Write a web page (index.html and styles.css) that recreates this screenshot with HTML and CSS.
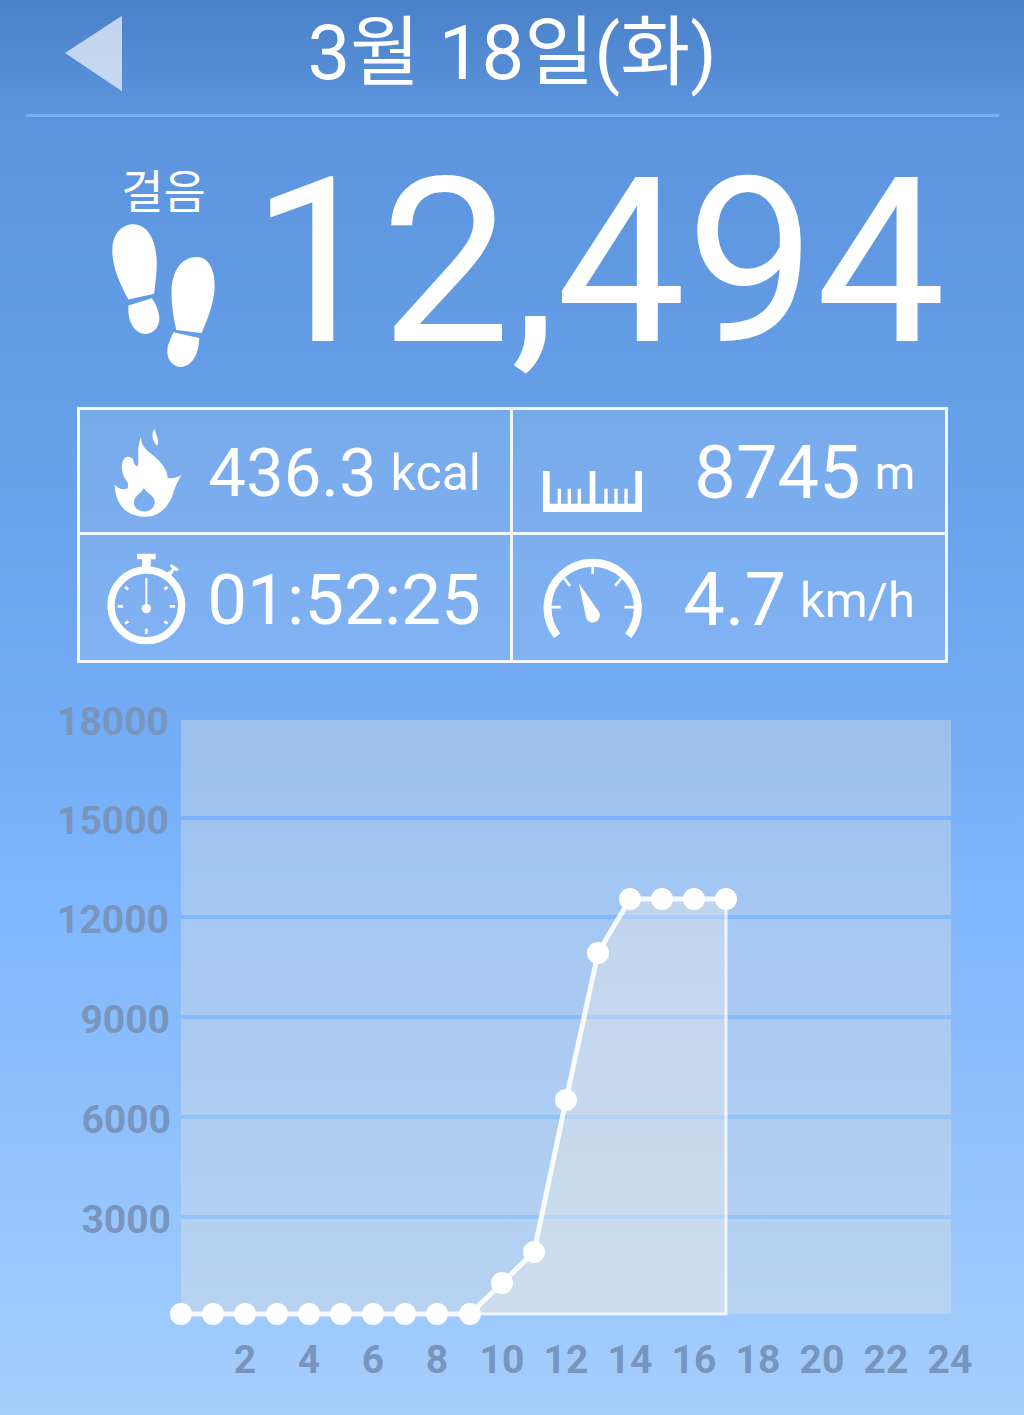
FILE: index.html
```html
<!DOCTYPE html>
<html lang="ko">

<head>
  <meta charset="UTF-8" />
  <meta name="viewport" content="width=device-width, initial-scale=1.0" />
  <title>걸음</title>
  <link rel="stylesheet" href="styles.css">
</head>

<body>

  <!-- Date header -->
  <header class="date-bar">
    <svg class="back-icon" viewBox="0 0 58 77"><path d="M58 0V77L0 38Z" /></svg>
    <h1 class="date-title">3월 18일(화)</h1>
  </header>

  <!-- Step count -->
  <section class="steps">
    <div class="steps-side">
      <div class="steps-label">걸음</div>
      <svg class="feet-icon" viewBox="330 665 320 440">
        <path d="M385 897C360 850 335 800 337 745C339 700 365 672 400 672C440 672 465 715 469 770C472 810 465 850 462 880Z" />
        <path d="M385 915L455 893C470 915 480 940 477 962C473 985 455 1000 435 1000C410 1000 392 975 387 950C385 938 384 925 385 915Z" />
        <path d="M528 988C520 950 513 910 514 870C516 810 545 770 590 770C625 770 645 810 643 860C641 910 620 960 604 997Z" />
        <path d="M520 995L597 1012C596 1040 590 1065 575 1082C560 1100 535 1105 518 1090C500 1075 498 1050 505 1030C510 1018 515 1005 520 995Z" />
      </svg>
    </div>
    <div class="steps-count">12,494</div>
  </section>

  <!-- Summary table -->
  <section class="stats">
    <div class="stat-cell">
      <svg class="stat-icon flame-icon" viewBox="28 15 205 270">
        <path d="M150 15C140 35 142 50 158 68C168 50 152 35 150 15Z" />
        <path fill-rule="evenodd" d="M110 40C108 60 118 75 140 92C165 112 188 135 190 165C205 168 220 163 232 155C222 170 215 185 208 205C200 240 170 282 125 282C75 282 32 255 30 185C40 198 55 202 68 197C72 190 72 182 66 174C52 155 45 125 60 105C68 98 80 100 85 108C88 118 90 128 98 130C108 122 92 85 110 40ZM118 195C112 210 88 218 88 238C88 255 102 266 120 266C138 266 151 254 151 237C151 218 128 212 118 195Z" />
      </svg>
      <div class="stat-text">
        <span class="stat-value">436.3</span>
        <span class="stat-unit unit-kcal">kcal</span>
      </div>
    </div>
    <div class="stat-cell">
      <svg class="stat-icon ruler-icon" viewBox="113 212 297 123">
        <path d="M113 212H133V310H157V265H167V310H187V265H197V310H217V265H227V310H253V212H270V310H297V265H307V310H327V265H337V310H357V265H367V310H390V212H410V335H113Z" />
      </svg>
      <div class="stat-text">
        <span class="stat-value value-big">8745</span>
        <span class="stat-unit unit-m">m</span>
      </div>
    </div>
    <div class="stat-cell">
      <svg class="stat-icon watch-icon" viewBox="22 20 240 282">
        <path d="M112 25H168V42H153V70H127V42H112Z" />
        <path d="M198 86L218 70L210 62L215 56L238 72L232 78L224 74L210 100Z" />
        <circle class="watch-ring" cx="140" cy="180" r="106" />
        <path class="watch-ticks" d="M140 250V266M54 183H70M226 183H210M76 125L86 132M204 125L194 132M76 235L86 228M204 235L194 228" />
        <path class="watch-hand" d="M140 98V185" />
        <circle cx="140" cy="190" r="14" />
      </svg>
      <div class="stat-text">
        <span class="stat-value value-time">01:52:25</span>
      </div>
    </div>
    <div class="stat-cell">
      <svg class="stat-icon gauge-icon" viewBox="113 474 297 244">
        <path class="gauge-arc" d="M155 708A136 136 0 1 1 369 708" />
        <path class="gauge-ticks" d="M262 492V522M176 535L194 558M348 535L330 558M135 622H166M389 622H358" />
        <path d="M220 549L281 637A21 21 0 1 1 243 657Z" />
      </svg>
      <div class="stat-text">
        <span class="stat-value value-big">4.7</span>
        <span class="stat-unit unit-speed">km/h</span>
      </div>
    </div>
  </section>

  <!-- Hourly chart -->
  <svg class="chart" viewBox="0 663 1024 752">
    <g class="plot-bg">
      <rect x="181" y="720" width="770" height="96" />
      <rect x="181" y="820" width="770" height="95" />
      <rect x="181" y="919" width="770" height="96" />
      <rect x="181" y="1019" width="770" height="96" />
      <rect x="181" y="1119" width="770" height="96" />
      <rect x="181" y="1219" width="770" height="95" />
    </g>
    <path class="area" d="M470 1314L502 1283L534 1252L566 1100L598 953L630 899H726V1314Z" />
    <path class="area-edge" d="M726 899V1314H470" />
    <path class="line" d="M181 1314H470L502 1283L534 1252L566 1100L598 953L630 899H726" />
    <g class="dots">
      <circle cx="181" cy="1314" r="11" /><circle cx="213" cy="1314" r="11" />
      <circle cx="245" cy="1314" r="11" /><circle cx="277" cy="1314" r="11" />
      <circle cx="309" cy="1314" r="11" /><circle cx="341" cy="1314" r="11" />
      <circle cx="373" cy="1314" r="11" /><circle cx="405" cy="1314" r="11" />
      <circle cx="437" cy="1314" r="11" /><circle cx="470" cy="1314" r="11" />
      <circle cx="502" cy="1283" r="11" /><circle cx="534" cy="1252" r="11" />
      <circle cx="566" cy="1100" r="11" /><circle cx="598" cy="953" r="11" />
      <circle cx="630" cy="899" r="11" /><circle cx="662" cy="899" r="11" />
      <circle cx="694" cy="899" r="11" /><circle cx="726" cy="899" r="11" />
    </g>
    <g class="y-labels">
      <text x="169" y="735">18000</text>
      <text x="169" y="834">15000</text>
      <text x="169" y="933">12000</text>
      <text x="170" y="1033">9000</text>
      <text x="171" y="1133">6000</text>
      <text x="171" y="1233">3000</text>
    </g>
    <g class="x-labels">
      <text x="245" y="1373">2</text>
      <text x="309" y="1373">4</text>
      <text x="373" y="1373">6</text>
      <text x="437" y="1373">8</text>
      <text x="502" y="1373">10</text>
      <text x="566" y="1373">12</text>
      <text x="630" y="1373">14</text>
      <text x="694" y="1373">16</text>
      <text x="758" y="1373">18</text>
      <text x="822" y="1373">20</text>
      <text x="886" y="1373">22</text>
      <text x="950" y="1373">24</text>
    </g>
  </svg>

</body>

</html>
```

FILE: styles.css
```css
/* Page */
body {
  font-family: Roboto, "Noto Sans CJK KR", sans-serif;
  margin: 0;
  width: 1024px;
  height: 1415px;
  overflow: hidden;
  color: #fff;
  background: linear-gradient(#4a81c9 0, #5c94dd 115px, #659fe8 400px, #72aaf4 700px, #7db5fd 870px, #a6cefc 1415px);
}

svg {
  display: block;
  fill: #fff;
}

/* Date header */
.date-bar {
  display: flex;
  align-items: center;
  height: 114px;
  margin: 0 25px 0 26px;
  border-bottom: 3px solid #7aaeef;
}

.back-icon {
  width: 57px;
  height: 77px;
  margin: -8px 0 0 39px;
  opacity: 0.66;
}

.date-title {
  flex: 1;
  margin: -8px 0 0 0;
  padding-right: 97px;
  font-size: 76px;
  font-weight: 400;
  line-height: 80px;
  text-align: center;
}

/* Step count */
.steps {
  display: flex;
  height: 290px;
}

.steps-side {
  width: 107px;
  margin: 50px 0 0 110px;
}

.steps-label {
  font-size: 46px;
  line-height: 50px;
  text-align: center;
}

.feet-icon {
  width: 107px;
  height: 147px;
  margin-top: 5px;
}

.steps-count {
  margin: 9px 0 0 34px;
  font-size: 231px;
  line-height: 273px;
  white-space: nowrap;
}

/* Summary table */
.stats {
  display: grid;
  grid-template-columns: 433px 435px;
  grid-template-rows: 125px 128px;
  width: 871px;
  margin-left: 77px;
  box-sizing: border-box;
  border-top: 3px solid #f2f8ff;
  border-left: 3px solid #f2f8ff;
  background: rgba(255, 255, 255, 0.12);
}

.stat-cell {
  display: flex;
  align-items: center;
  justify-content: space-between;
  border-right: 3px solid #f2f8ff;
  border-bottom: 3px solid #f2f8ff;
  padding: 0 29px 0 30px;
}

.stat-cell:nth-child(even) {
  padding-right: 30px;
}

.stat-text {
  margin-top: 4px;
  white-space: nowrap;
}

.stat-value {
  font-size: 67px;
  line-height: 80px;
}

.value-big {
  font-size: 74px;
}

.value-time {
  font-size: 71px;
}

.stat-unit {
  margin-left: 10px;
  font-size: 50px;
}

.unit-kcal {
  vertical-align: 6px;
}

.unit-m {
  font-size: 46px;
  vertical-align: 9px;
}

.unit-speed {
  font-size: 49px;
  vertical-align: 8px;
}

.flame-icon {
  width: 68px;
  height: 90px;
  margin: 4px 0 0 4px;
}

.ruler-icon {
  width: 99px;
  height: 41px;
  margin-top: 40px;
}

.watch-icon {
  width: 80px;
  height: 94px;
  margin: 2px 0 0 -3px;
}

.gauge-icon {
  width: 99px;
  height: 81px;
  margin-top: 2px;
}

.watch-ring,
.watch-ticks,
.watch-hand,
.gauge-arc,
.gauge-ticks {
  fill: none;
  stroke: #fff;
}

.watch-ring {
  stroke-width: 22;
}

.watch-ticks {
  stroke-width: 8;
}

.watch-hand {
  stroke-width: 6;
}

.gauge-arc {
  stroke-width: 24;
}

.gauge-ticks {
  stroke-width: 8;
}

/* Hourly chart */
.chart {
  width: 1024px;
  height: 752px;
}

.plot-bg {
  fill: rgba(232, 228, 222, 0.35);
}

.area {
  fill: rgba(246, 240, 232, 0.35);
}

.area-edge {
  fill: none;
  stroke: rgba(255, 255, 255, 0.75);
  stroke-width: 3;
}

.line {
  fill: none;
  stroke: rgba(255, 255, 255, 0.9);
  stroke-width: 5;
}

.y-labels text,
.x-labels text {
  font-size: 39px;
  font-weight: 700;
  fill: #7896bd;
}

.y-labels text {
  text-anchor: end;
}

.x-labels text {
  text-anchor: middle;
}
```
